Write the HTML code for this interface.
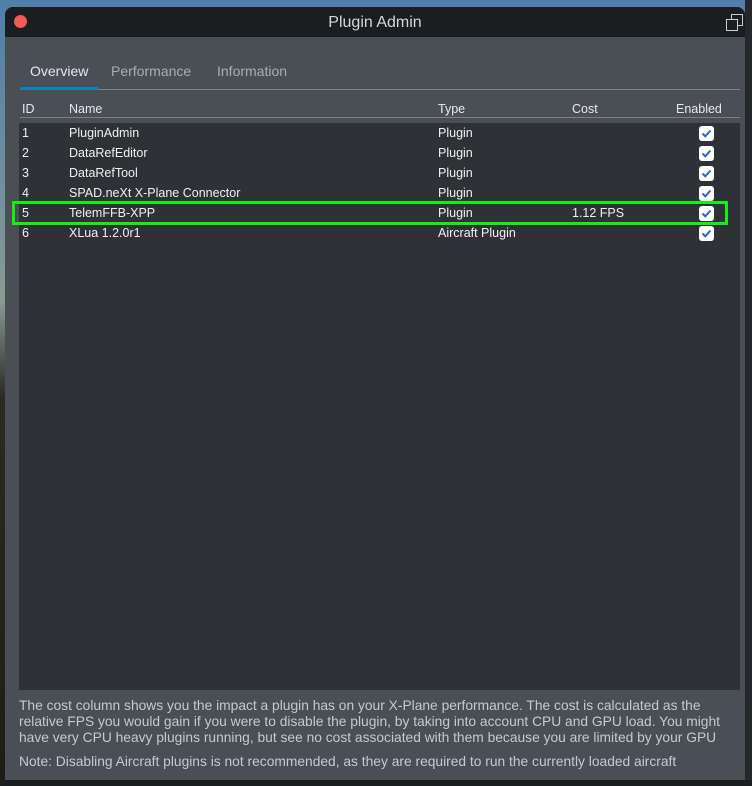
<!DOCTYPE html>
<html><head><style>
*{margin:0;padding:0;box-sizing:border-box}
body{width:752px;height:786px;overflow:hidden;position:relative;font-family:"Liberation Sans",sans-serif;background:#1a1712}
.bgtop{position:absolute;left:0;top:0;width:752px;height:300px;background:linear-gradient(#4f7fa8,#6f8fa0 60%,#8a9a90)}
.bgleft{position:absolute;left:0;top:300px;width:8px;height:486px;background:linear-gradient(#8a9a95,#2a2a25 20%,#201c14)}
.bot{position:absolute;left:0;top:780px;width:752px;height:6px;background:#1b1d1f}
.rstrip{position:absolute;left:745px;top:0;width:7px;height:786px;background:#25282b}
.win{position:absolute;left:5px;top:7px;width:740px;height:773px;background:#4a4f56;border-radius:8px 8px 0 0;overflow:hidden}
.title{height:30px;background:#1b1e20;color:#d6d6d6;font-size:16px;text-align:center;line-height:32px;position:relative}
.dot{position:absolute;left:9px;top:8px;width:13px;height:13px;border-radius:50%;background:#f25a55}
.tabs{position:absolute;top:56px;left:0;font-size:14px;color:#a8adb2}
.tabs span{position:absolute;white-space:nowrap}
.tline{position:absolute;left:15px;top:82px;width:720px;height:1px;background:#7c8086}
.uline{position:absolute;left:16px;top:80px;width:77px;height:3px;background:#0a84c0}
.hdr{position:absolute;top:95px;font-size:12.5px;color:#e8e8e8}
.hline{position:absolute;left:15px;top:110px;width:720px;height:1px;background:#7c8086}
.tbl{position:absolute;left:14px;top:116px;width:721px;height:567px;background:#2e3135}
.row{position:absolute;left:0;width:721px;height:20px;font-size:12.5px;color:#f0f0f0;line-height:20px}
.row span{position:absolute}
.cb{position:absolute;left:680px;top:3px;width:15px;height:15px;background:#fff;border-radius:3px}
.cb svg{position:absolute;left:2px;top:2px}
.green{position:absolute;left:12px;top:201px;width:716px;height:24px;border:3px solid #12f012}
.foot{position:absolute;left:14px;font-size:13.8px;color:#c6c9cc;line-height:16px;white-space:nowrap}
</style></head><body>
<div class="bgtop"></div><div class="bgleft"></div><div class="rstrip"></div><div class="bot"></div>
<div class="win">
<div class="title"><div class="dot"></div>Plugin Admin
<svg style="position:absolute;left:721px;top:7px" width="17" height="17" viewBox="0 0 17 17"><rect x="5.5" y="0.5" width="11" height="11" fill="#1b1e20" stroke="#ccc"/><rect x="0.5" y="5.5" width="11" height="11" fill="#1b1e20" stroke="#ccc"/></svg></div>
<div class="tabs"><span style="left:25px;color:#e6e6e6">Overview</span><span style="left:106px">Performance</span><span style="left:212px">Information</span></div>
<div class="tline"></div><div class="uline"></div>
<div class="hdr" style="left:17px">ID</div><div class="hdr" style="left:64px">Name</div><div class="hdr" style="left:433px">Type</div><div class="hdr" style="left:567px">Cost</div><div class="hdr" style="left:671px">Enabled</div>
<div class="hline"></div>
<div class="tbl">
<div class="row" style="top:0"><span style="left:3px">1</span><span style="left:50px">PluginAdmin</span><span style="left:419px">Plugin</span><div class="cb"><svg width="11" height="11" viewBox="0 0 11 11"><path d="M1.5 5.5L4.3 8.3L9.5 2.5" fill="none" stroke="#2a64c8" stroke-width="2"/></svg></div></div>
<div class="row" style="top:20px"><span style="left:3px">2</span><span style="left:50px">DataRefEditor</span><span style="left:419px">Plugin</span><div class="cb"><svg width="11" height="11" viewBox="0 0 11 11"><path d="M1.5 5.5L4.3 8.3L9.5 2.5" fill="none" stroke="#2a64c8" stroke-width="2"/></svg></div></div>
<div class="row" style="top:40px"><span style="left:3px">3</span><span style="left:50px">DataRefTool</span><span style="left:419px">Plugin</span><div class="cb"><svg width="11" height="11" viewBox="0 0 11 11"><path d="M1.5 5.5L4.3 8.3L9.5 2.5" fill="none" stroke="#2a64c8" stroke-width="2"/></svg></div></div>
<div class="row" style="top:60px"><span style="left:3px">4</span><span style="left:50px">SPAD.neXt X-Plane Connector</span><span style="left:419px">Plugin</span><div class="cb"><svg width="11" height="11" viewBox="0 0 11 11"><path d="M1.5 5.5L4.3 8.3L9.5 2.5" fill="none" stroke="#2a64c8" stroke-width="2"/></svg></div></div>
<div class="row" style="top:80px"><span style="left:3px">5</span><span style="left:50px">TelemFFB-XPP</span><span style="left:419px">Plugin</span><span style="left:553px">1.12 FPS</span><div class="cb"><svg width="11" height="11" viewBox="0 0 11 11"><path d="M1.5 5.5L4.3 8.3L9.5 2.5" fill="none" stroke="#2a64c8" stroke-width="2"/></svg></div></div>
<div class="row" style="top:100px"><span style="left:3px">6</span><span style="left:50px">XLua 1.2.0r1</span><span style="left:419px">Aircraft Plugin</span><div class="cb"><svg width="11" height="11" viewBox="0 0 11 11"><path d="M1.5 5.5L4.3 8.3L9.5 2.5" fill="none" stroke="#2a64c8" stroke-width="2"/></svg></div></div>
</div>
<div class="foot" style="top:691px">The cost column shows you the impact a plugin has on your X-Plane performance. The cost is calculated as the<br>relative FPS you would gain if you were to disable the plugin, by taking into account CPU and GPU load. You might<br>have very CPU heavy plugins running, but see no cost associated with them because you are limited by your GPU</div>
<div class="foot" style="top:747px">Note: Disabling Aircraft plugins is not recommended, as they are required to run the currently loaded aircraft</div>
</div>
<div class="green"></div>
</body></html>
